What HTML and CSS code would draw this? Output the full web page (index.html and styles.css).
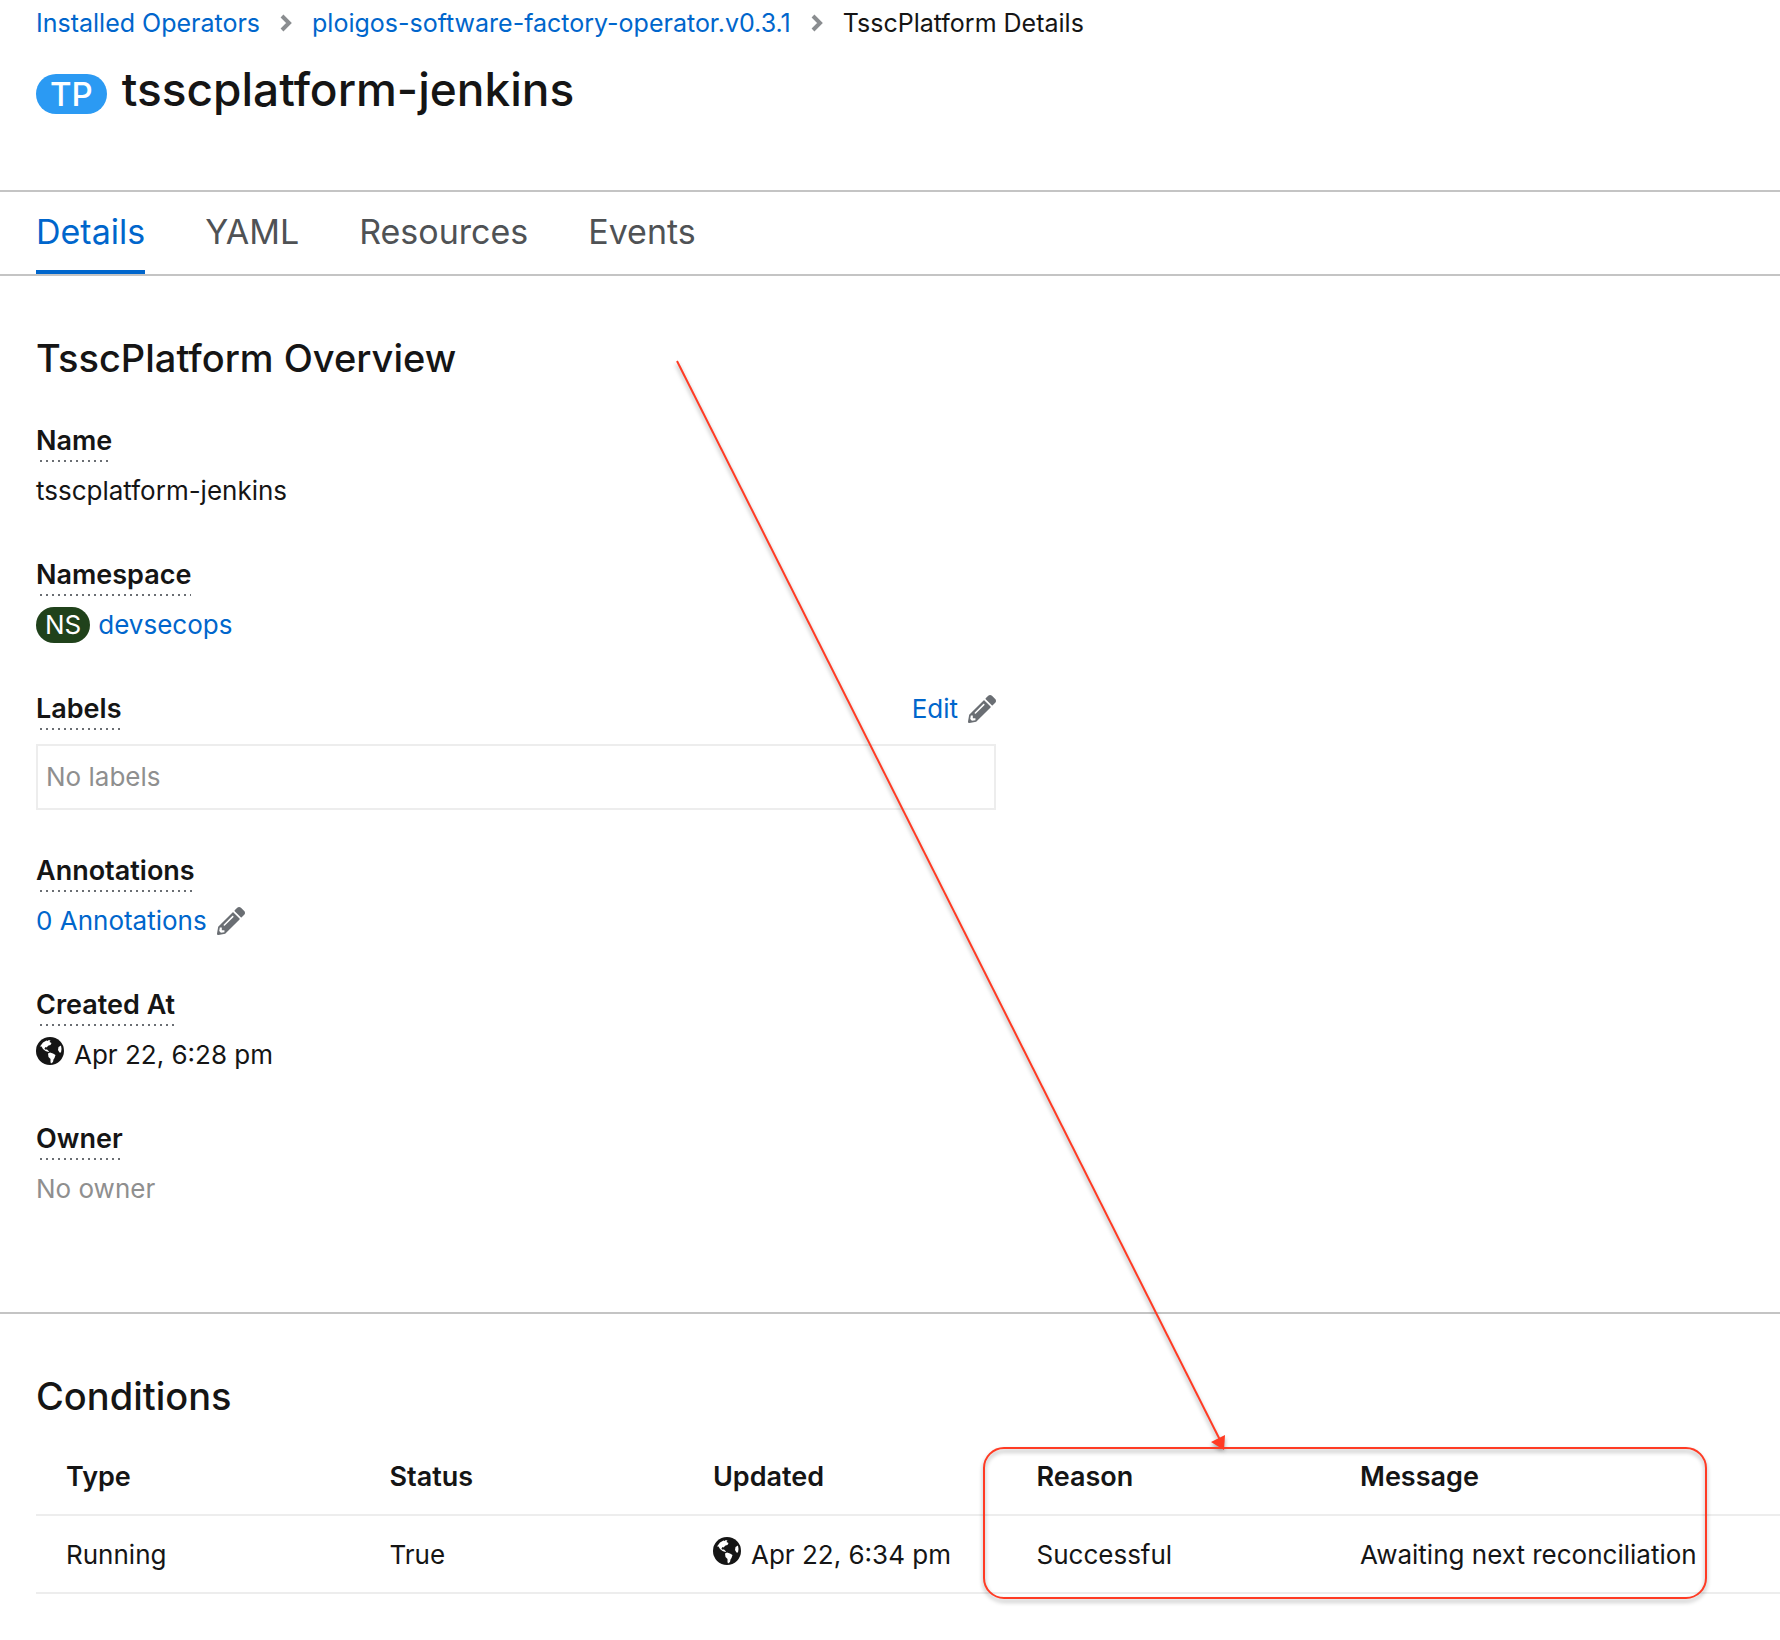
FILE: index.html
```html
<!DOCTYPE html>
<html lang="en">
<head>
<meta charset="utf-8">
<title>tsscplatform-jenkins · Details</title>
<link rel="stylesheet" href="styles.css">
</head>
<body>
<svg class="sprite" aria-hidden="true">
  <symbol id="icon-pencil" viewBox="0 0 512 512"><path d="M497.900 142.100l-46.100 46.100c-4.700 4.700-12.300 4.700-17 0l-111-111c-4.700-4.700-4.700-12.300 0-17l46.100-46.100c18.700-18.700 49.100-18.700 67.900 0l60.100 60.100c18.800 18.700 18.800 49.100 0 67.900zM284.200 99.800L21.600 362.400.4 483.900c-2.900 16.400 11.400 30.600 27.800 27.800l121.500-21.300 262.600-262.600c4.700-4.700 4.700-12.300 0-17l-111-111c-4.800-4.700-12.400-4.700-17.100 0zM124.100 339.900c-5.500-5.500-5.500-14.300 0-19.800l154-154c5.500-5.500 14.300-5.500 19.800 0s5.500 14.300 0 19.800l-154 154c-5.500 5.500-14.300 5.500-19.800 0zM88 424h48v36.300l-64.500 11.300-31.100-31.100L51.700 376H88v48z"/></symbol>
  <symbol id="icon-globe" viewBox="0 0 28 28"><circle cx="14" cy="14" r="14"/><path fill="#fff" d="M4 9.500L7 5.500 10.500 3.500 12 4 12.500 3 14.500 3.500 13.500 5 15.500 6 14.500 8 12.500 8.500 10.500 10.500 9.500 10 8.500 11.500 9 12.500 11 12.500 13 14.500 12.500 15 9.500 14 7 12 5.500 9.500zM12 16.500L14 15.500 17 16.500 19.500 18 18.500 21 17.500 22.500 17 25 15 26.500 14.500 25 14.500 22 12.500 20zM22.500 10L25 8.500 25.500 12 25 15.500 23.500 15.500 22 13z"/></symbol>
  <symbol id="icon-chevron" viewBox="0 0 12 18"><path d="M2 2l7 7-7 7" fill="none" stroke="currentColor" stroke-width="4"/></symbol>
</svg>
<main class="page">
  <header class="page-header">
    <nav aria-label="Breadcrumb">
      <ol class="breadcrumb">
        <li><a href="#">Installed Operators</a><svg class="chevron" aria-hidden="true"><use href="#icon-chevron"/></svg></li>
        <li><a href="#">ploigos-software-factory-operator.v0.3.1</a><svg class="chevron" aria-hidden="true"><use href="#icon-chevron"/></svg></li>
        <li aria-current="page">TsscPlatform Details</li>
      </ol>
    </nav>
    <h1 class="title"><span class="badge badge-large">TP</span><span>tsscplatform-jenkins</span></h1>
  </header>

  <nav class="tabs" aria-label="Sections">
    <a class="tab tab-active" href="#" aria-current="true">Details</a>
    <a class="tab" href="#">YAML</a>
    <a class="tab" href="#">Resources</a>
    <a class="tab" href="#">Events</a>
  </nav>

  <section class="section overview">
    <h2>TsscPlatform Overview</h2>
    <dl class="details">
      <div class="item">
        <dt><button class="term" type="button">Name</button></dt>
        <dd>tsscplatform-jenkins</dd>
      </div>
      <div class="item">
        <dt><button class="term" type="button">Namespace</button></dt>
        <dd class="inline"><span class="badge badge-namespace">NS</span><a href="#">devsecops</a></dd>
      </div>
      <div class="item item-boxed">
        <dt class="term-row"><button class="term" type="button">Labels</button><button class="edit" type="button">Edit<svg class="icon pencil" aria-hidden="true"><use href="#icon-pencil"/></svg></button></dt>
        <dd class="label-box">No labels</dd>
      </div>
      <div class="item">
        <dt><button class="term" type="button">Annotations</button></dt>
        <dd><button class="edit" type="button">0 Annotations<svg class="icon pencil" aria-hidden="true"><use href="#icon-pencil"/></svg></button></dd>
      </div>
      <div class="item">
        <dt><button class="term" type="button">Created At</button></dt>
        <dd class="timestamp"><svg class="icon globe" aria-hidden="true"><use href="#icon-globe"/></svg>Apr 22, 6:28 pm</dd>
      </div>
      <div class="item">
        <dt><button class="term" type="button">Owner</button></dt>
        <dd class="muted">No owner</dd>
      </div>
    </dl>
  </section>

  <section class="section conditions">
    <h2>Conditions</h2>
    <table>
      <thead>
        <tr><th scope="col">Type</th><th scope="col">Status</th><th scope="col">Updated</th><th scope="col">Reason</th><th class="wide" scope="col">Message</th></tr>
      </thead>
      <tbody>
        <tr><td>Running</td><td>True</td><td><span class="timestamp"><svg class="icon globe" aria-hidden="true"><use href="#icon-globe"/></svg>Apr 22, 6:34 pm</span></td><td>Successful</td><td>Awaiting next reconciliation</td></tr>
      </tbody>
    </table>
  </section>

  <svg class="callout" width="1780" height="1640" aria-hidden="true">
    <path class="callout-line" d="M677 361L1220 1440"/>
    <rect class="callout-line" x="984" y="1448" width="722" height="150" rx="20"/>
    <path class="callout-head" d="M1211 1442L1225 1435L1224 1450z"/>
  </svg>
</main>
</body>
</html>
```
FILE: styles.css
```css
* {
  box-sizing: border-box;
}

body {
  margin: 0;
  background: #fff;
  color: #151515;
  font-family: Inter, "Liberation Sans", sans-serif;
  font-size: 26px;
  line-height: 36px;
}

a {
  color: #06c;
  text-decoration: none;
}

button {
  padding: 0;
  border: 0;
  background: none;
  color: inherit;
  font: inherit;
  cursor: pointer;
}

h1,
h2,
dl,
dd,
ol {
  margin: 0;
  padding: 0;
}

h1,
h2 {
  font-weight: 500;
}

.sprite {
  display: none;
}

.page {
  position: relative;
  overflow: hidden;
}

.page-header {
  padding: 5px 36px 68px;
}

.breadcrumb {
  display: flex;
  list-style: none;
  font-size: 25px;
}

.breadcrumb li {
  display: flex;
  align-items: center;
}

.chevron {
  width: 12px;
  height: 18px;
  margin: 0 20px;
  color: #8a8d90;
}

.title {
  display: flex;
  align-items: center;
  gap: 15px;
  margin-top: 15px;
  font-size: 46px;
  line-height: 66px;
}

.badge {
  padding: 0 9px;
  border-radius: 20px;
  color: #fff;
}

.badge-large {
  margin-top: 9px;
  padding: 0 14px;
  background: #2b9af3;
  font-size: 33px;
  font-weight: 500;
  line-height: 40px;
}

.badge-namespace {
  background: #20421b;
}

.tabs {
  display: flex;
  gap: 60px;
  padding: 0 36px;
  border: solid #c4c4c4;
  border-width: 2px 0;
}

.tab {
  padding: 18px 0 16px;
  border-bottom: 4px solid transparent;
  color: #4f5255;
  font-size: 34px;
  line-height: 44px;
}

.tab-active {
  border-color: #06c;
  color: #06c;
}

.section {
  padding-left: 36px;
}

h2 {
  font-size: 38px;
  line-height: 48px;
}

.overview {
  padding-top: 58px;
  padding-bottom: 105px;
}

.details {
  display: grid;
  gap: 48px;
  width: 56%;
  max-width: 960px;
  margin-top: 41px;
}

.item {
  display: grid;
  gap: 11px;
}

.item-boxed {
  gap: 14px;
  margin-bottom: -5px;
}

dt {
  display: flex;
}

.term-row {
  align-items: flex-start;
  justify-content: space-between;
}

.term {
  padding-bottom: 3px;
  background: repeating-linear-gradient(90deg, transparent 0 4px, #6a6e73 4px 6px) bottom / 100% 2px no-repeat;
  font-size: 27px;
  font-weight: 600;
}

.inline {
  display: flex;
  gap: 8px;
}

.edit {
  display: flex;
  align-items: center;
  gap: 10px;
  color: #06c;
}

.icon {
  width: 28px;
  height: 28px;
}

.pencil {
  fill: #6a6e73;
}

.globe {
  margin-bottom: 8px;
  fill: #151515;
}

.timestamp {
  display: flex;
  align-items: center;
  gap: 10px;
}

.muted {
  color: #8f8f8f;
}

.label-box {
  padding: 13px 8px;
  border: 2px solid #ededed;
  color: #8f8f8f;
}

.conditions {
  padding-top: 58px;
  padding-bottom: 46px;
  border-top: 2px solid #c4c4c4;
}

table {
  width: 100%;
  margin-top: 18px;
  border-collapse: collapse;
  table-layout: fixed;
}

th,
td {
  width: 18.55%;
  padding: 21px 0 19px 30px;
  border-bottom: 2px solid #ededed;
  text-align: left;
  white-space: nowrap;
}

th {
  font-size: 27px;
  font-weight: 600;
}

.wide {
  width: auto;
}

.callout {
  position: absolute;
  top: 0;
  left: 0;
  pointer-events: none;
  filter: drop-shadow(0 3px 2px rgba(0, 0, 0, 0.35));
}

.callout-line {
  fill: none;
  stroke: #ff3b24;
  stroke-width: 2;
}

.callout-head {
  fill: #ff3b24;
}
```
